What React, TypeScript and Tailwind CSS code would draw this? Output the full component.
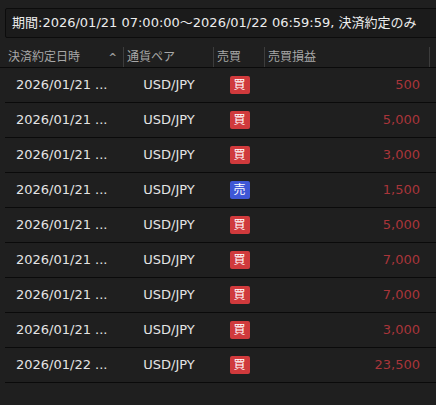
import React from 'react';

type Trade = {
    date: string;
    pair: string;
    side: 'buy' | 'sell';
    pl: string;
};

const trades: Trade[] = [
    { date: '2026/01/21 ...', pair: 'USD/JPY', side: 'buy', pl: '500' },
    { date: '2026/01/21 ...', pair: 'USD/JPY', side: 'buy', pl: '5,000' },
    { date: '2026/01/21 ...', pair: 'USD/JPY', side: 'buy', pl: '3,000' },
    { date: '2026/01/21 ...', pair: 'USD/JPY', side: 'sell', pl: '1,500' },
    { date: '2026/01/21 ...', pair: 'USD/JPY', side: 'buy', pl: '5,000' },
    { date: '2026/01/21 ...', pair: 'USD/JPY', side: 'buy', pl: '7,000' },
    { date: '2026/01/21 ...', pair: 'USD/JPY', side: 'buy', pl: '7,000' },
    { date: '2026/01/21 ...', pair: 'USD/JPY', side: 'buy', pl: '3,000' },
    { date: '2026/01/22 ...', pair: 'USD/JPY', side: 'buy', pl: '23,500' },
];

const SideBadge: React.FC<{ side: Trade['side'] }> = ({ side }) => (
    <span
        className={`flex h-[18px] w-[20px] items-center justify-center rounded-[2px] text-[12px] leading-none text-white ${
            side === 'buy' ? 'bg-[#d03a3c]' : 'bg-[#3f57d6]'
        }`}
    >
        {side === 'buy' ? '買' : '売'}
    </span>
);

export default function App() {
    return (
        <div
            className="h-[405px] w-[436px] overflow-hidden bg-[#1f1f1f] text-[13px] text-[#e4e4e4]"
            style={{ fontFamily: '"DejaVu Sans", "Noto Sans CJK JP", sans-serif' }}
        >
            {/* filter summary */}
            <div className="pt-[8px] pl-[5px]">
                <div className="flex h-[30px] w-[460px] items-center whitespace-nowrap rounded-[2px] border border-[#0c0c0c] bg-[#1b1b1b] pl-[6px] text-[13px] text-[#ececec]">
                    期間:2026/01/21 07:00:00～2026/01/22 06:59:59, 決済約定のみ
                </div>
            </div>

            {/* table header */}
            <div className="mt-[9px] flex h-[21px] items-center text-[12px] text-[#a8a8a8]">
                <div className="flex h-full flex-1 items-center border-b border-[#0a0a0a] pl-[3px]">
                    <div className="flex h-full w-[121px] items-center justify-between border-r border-[#3c3c3c] pl-[5px] pr-[6px]">
                        <span>決済約定日時</span>
                        <span className="text-[10px] font-bold text-[#9a9a9a]">^</span>
                    </div>
                    <div className="flex h-full w-[90px] items-center border-r border-[#3c3c3c] pl-[3px]">通貨ペア</div>
                    <div className="flex h-full w-[51px] items-center border-r border-[#3c3c3c] pl-[3px]">売買</div>
                    <div className="flex h-full w-[165px] items-center border-r border-[#3c3c3c] pl-[3px]">売買損益</div>
                </div>
            </div>

            {/* rows */}
            <div className="ml-[5px]">
                {trades.map((t, i) => (
                    <div key={i} className="flex h-[35px] items-center border-b border-[#0a0a0a]">
                        <div className="w-[119px] pl-[11px]">{t.date}</div>
                        <div className="w-[90px] text-center">{t.pair}</div>
                        <div className="flex w-[51px] justify-center">
                            <SideBadge side={t.side} />
                        </div>
                        <div className="w-[165px] pr-[10px] text-right text-[#a8353a]">{t.pl}</div>
                    </div>
                ))}
            </div>
        </div>
    );
}
